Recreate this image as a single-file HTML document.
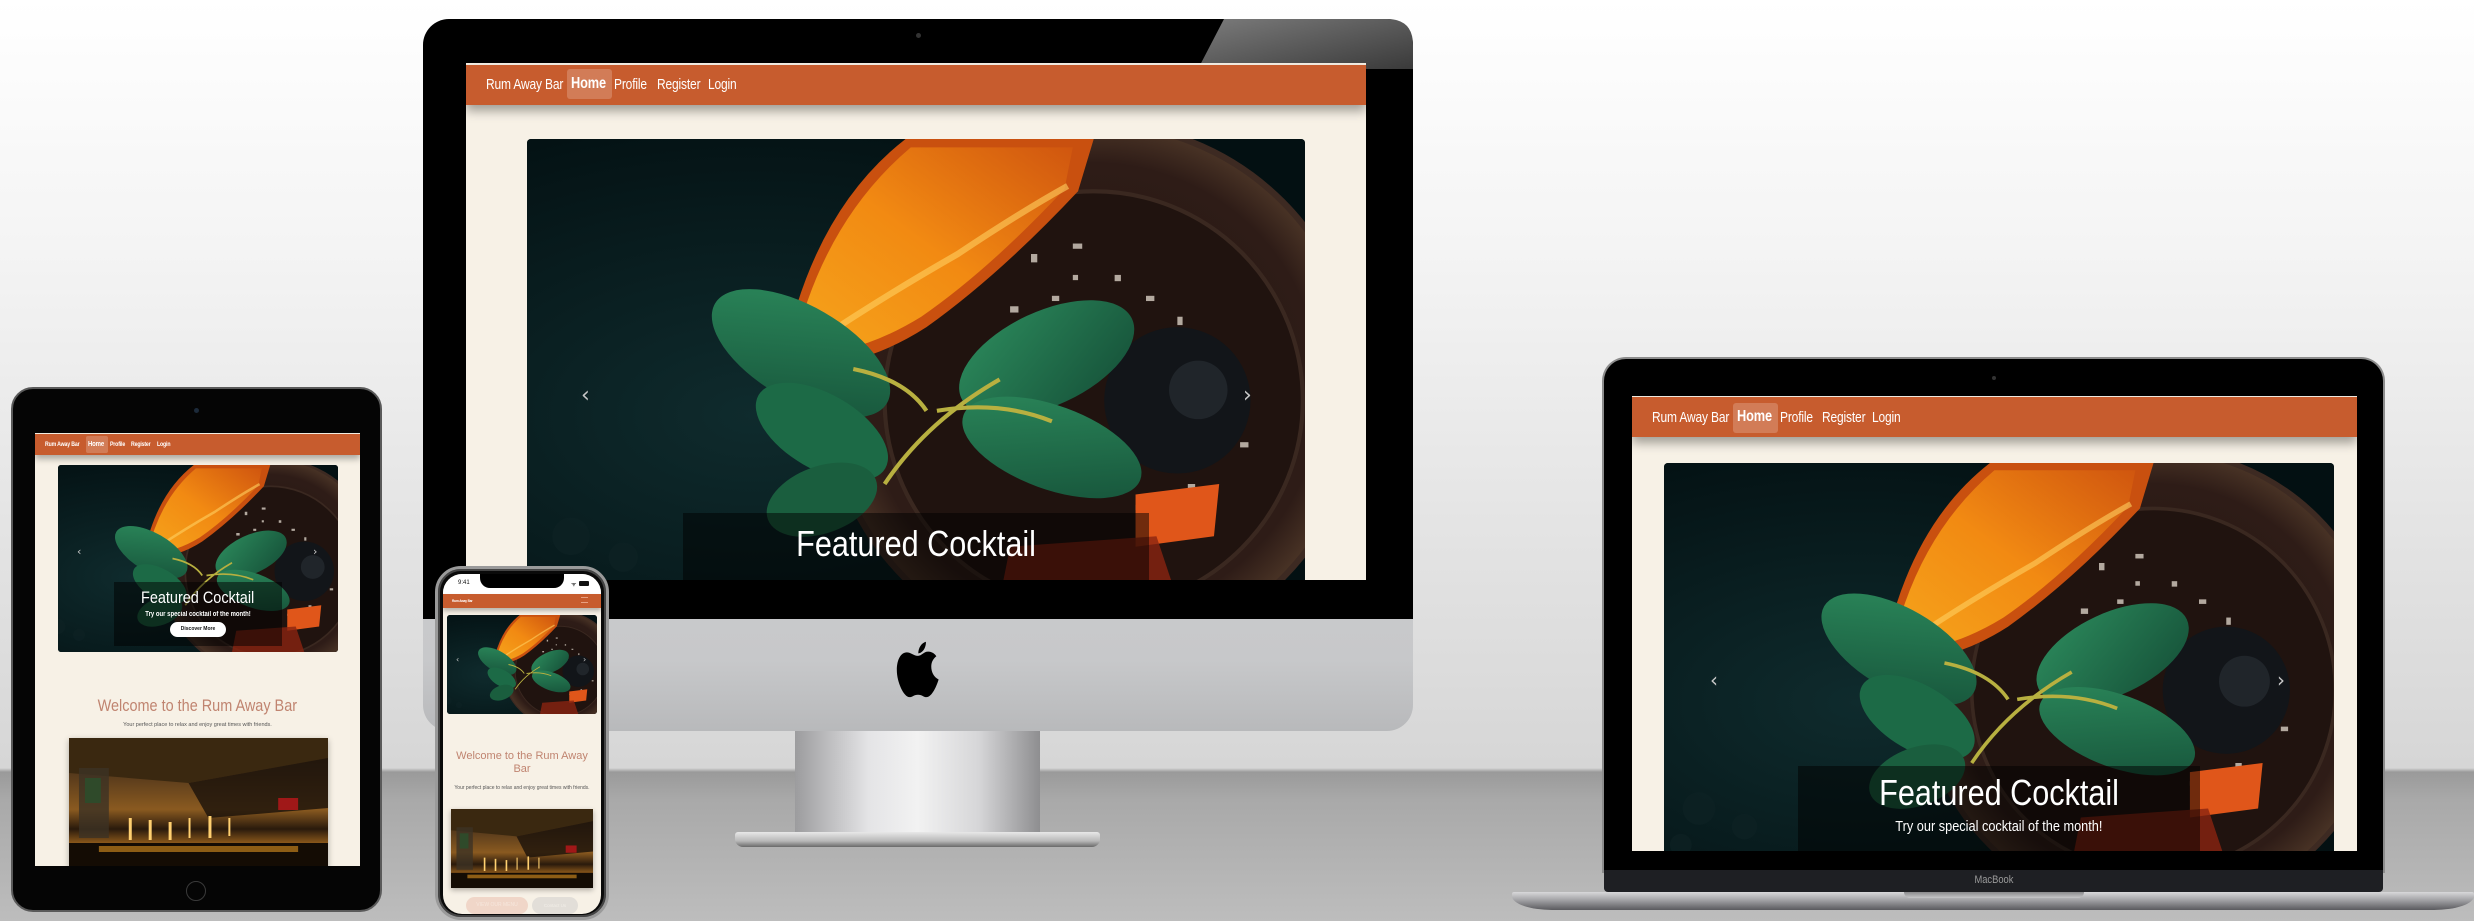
<!DOCTYPE html>
<html><head><meta charset="utf-8">
<style>
*{margin:0;padding:0;box-sizing:border-box}
body{width:2474px;height:921px;overflow:hidden;position:relative;font-family:"Liberation Sans",sans-serif;
background:linear-gradient(180deg,#ffffff 0px,#f4f4f4 250px,#e2e2e2 560px,#d6d6d6 768px,#9a9a9a 772px,#a9a9a9 800px,#bdbdbd 921px);}
.a{position:absolute}
.cream{background:#f7f1e6}
.nav{background:#c75c2e;box-shadow:0 6px 10px rgba(0,0,0,.35);color:#fff}
.nav span{position:absolute;white-space:nowrap}
.nav .n{transform:scaleX(.8);transform-origin:0 0;letter-spacing:-0.2px}
.car{overflow:hidden;border-radius:4px;background:#071619}
.car svg{position:absolute;left:0;top:0;width:100%;height:100%}
.cap{background:rgba(0,0,0,.5);color:#fff;text-align:center;white-space:nowrap}
.sx{display:inline-block;transform:scaleX(.85)}
.chev{color:#c8c8c8;font-family:"DejaVu Sans",sans-serif}
</style></head><body>

<svg width="0" height="0" style="position:absolute">
<defs>
<radialGradient id="bgg" cx="0.3" cy="0.6" r="0.7"><stop offset="0" stop-color="#0f2b2d"/><stop offset="1" stop-color="#031012"/></radialGradient>
<radialGradient id="gl" cx="0.5" cy="0.5" r="0.5"><stop offset="0" stop-color="#231512"/><stop offset="0.85" stop-color="#2e1c17"/><stop offset="1" stop-color="#4a3426"/></radialGradient>
<linearGradient id="org" x1="0" y1="1" x2="1" y2="0"><stop offset="0" stop-color="#f5a51c"/><stop offset="0.5" stop-color="#f28a12"/><stop offset="1" stop-color="#d0560f"/></linearGradient>
<linearGradient id="lf" x1="0" y1="0" x2="1" y2="1"><stop offset="0" stop-color="#2c8a5c"/><stop offset="1" stop-color="#155038"/></linearGradient>
<linearGradient id="barg" x1="0" y1="0" x2="0" y2="1"><stop offset="0" stop-color="#2a1d12"/><stop offset="0.3" stop-color="#5a3c1c"/><stop offset="0.55" stop-color="#8a5a20"/><stop offset="0.7" stop-color="#2a1a0c"/><stop offset="0.85" stop-color="#b07020"/><stop offset="1" stop-color="#1a1006"/></linearGradient>
<g id="ck">
<rect width="780" height="440" fill="url(#bgg)"/>
<circle cx="590" cy="40" r="30" fill="#3a0e12" opacity=".5"/>
<circle cx="560" cy="240" r="255" fill="url(#gl)" stroke="#3d2a22" stroke-width="6"/>
<circle cx="560" cy="250" r="200" fill="#20130f" stroke="#3a2820" stroke-width="4"/>
<g fill="#d8cfc4" opacity=".8">
<rect x="470" y="90" width="8" height="5"/><rect x="500" y="110" width="6" height="8"/><rect x="540" y="100" width="9" height="5"/><rect x="580" y="130" width="6" height="6"/><rect x="610" y="150" width="8" height="5"/><rect x="640" y="170" width="5" height="8"/><rect x="520" y="150" width="7" height="5"/><rect x="560" y="170" width="6" height="6"/><rect x="480" y="160" width="8" height="6"/><rect x="660" y="210" width="7" height="5"/><rect x="690" y="250" width="5" height="8"/><rect x="700" y="290" width="8" height="5"/><rect x="650" y="330" width="7" height="6"/><rect x="620" y="300" width="6" height="6"/><rect x="600" y="350" width="8" height="5"/><rect x="540" y="130" width="5" height="5"/><rect x="590" y="190" width="6" height="5"/><rect x="670" y="280" width="6" height="6"/>
</g>
<circle cx="640" cy="250" r="70" fill="#121519"/>
<circle cx="660" cy="240" r="28" fill="#2a3036" opacity=".6"/>
<path d="M600 340 L680 330 L675 380 L600 390 Z" fill="#e0561a"/>
<path d="M480 390 L620 380 L640 440 L470 440 Z" fill="#8a2410" opacity=".8"/>
<path d="M262 215 Q290 70 380 0 L560 0 L545 50 Q470 130 400 180 Q330 225 262 215 Z" fill="#c9500f"/>
<path d="M272 205 Q300 80 385 8 L540 8 L532 48 Q460 125 395 170 Q330 210 272 205 Z" fill="url(#org)"/>
<path d="M300 190 Q360 150 430 110 Q490 70 535 45" stroke="#ffd060" stroke-width="6" fill="none" opacity=".6"/>
<ellipse cx="280" cy="205" rx="95" ry="45" transform="rotate(30 280 205)" fill="url(#lf)"/>
<ellipse cx="515" cy="210" rx="90" ry="45" transform="rotate(-25 515 210)" fill="url(#lf)"/>
<ellipse cx="300" cy="280" rx="70" ry="36" transform="rotate(30 300 280)" fill="#1c6a46"/>
<ellipse cx="520" cy="295" rx="90" ry="40" transform="rotate(20 520 295)" fill="url(#lf)"/>
<ellipse cx="300" cy="345" rx="55" ry="32" transform="rotate(-20 300 345)" fill="#1a5e3e"/>
<path d="M360 330 Q400 270 470 230 M400 260 Q380 230 330 220 M410 260 Q470 250 520 270" stroke="#b8b040" stroke-width="4" fill="none"/>
<g fill="#0e2224" opacity=".7"><circle cx="60" cy="380" r="18"/><circle cx="110" cy="400" r="14"/><circle cx="40" cy="420" r="12"/></g>
</g>
<g id="bar">
<rect width="260" height="130" fill="url(#barg)"/>
<path d="M0 0 L260 0 L260 20 L120 45 L0 35 Z" fill="#3a2810"/>
<path d="M120 45 L260 20 L260 70 L140 80 Z" fill="#1a120a" opacity=".8"/>
<rect x="10" y="30" width="30" height="70" fill="#3c3224" opacity=".8"/>
<rect x="16" y="40" width="16" height="25" fill="#2f4a2a"/>
<g fill="#ffd070"><rect x="60" y="80" width="3" height="22"/><rect x="80" y="82" width="3" height="20"/><rect x="100" y="84" width="3" height="18"/><rect x="120" y="80" width="2" height="20"/><rect x="140" y="78" width="3" height="22"/><rect x="160" y="80" width="2" height="18"/></g>
<rect x="210" y="60" width="20" height="12" fill="#a01818"/>
<rect x="0" y="105" width="260" height="25" fill="#140c04"/>
<rect x="30" y="108" width="200" height="6" fill="#c0801c" opacity=".7"/>
</g>
</defs>
</svg>

<!-- ========== iMac ========== -->
<div class="a" style="left:423px;top:19px;width:990px;height:712px;border-radius:26px;background:linear-gradient(180deg,#d9dadc,#c7c8ca 90%,#b8b9bb);"></div>
<div class="a" style="left:423px;top:19px;width:990px;height:600px;border-radius:26px 26px 0 0;background:#000;"></div>
<svg class="a" style="left:1190px;top:19px" width="223" height="50"><defs><linearGradient id="gs" x1="0" y1="0" x2="1" y2="1"><stop offset="0" stop-color="#7b7b7b"/><stop offset="1" stop-color="#3a3a3a"/></linearGradient></defs><path d="M34 0 L197 0 Q223 0 223 26 L223 50 L8 50 Z" fill="url(#gs)"/></svg>
<div class="a" style="left:916px;top:33px;width:5px;height:5px;border-radius:50%;background:#333"></div>
<div class="a cream" style="left:466px;top:63px;width:900px;height:517px;overflow:hidden">
  <div class="a nav" style="left:0;top:2px;width:900px;height:40px;">
    <span class="n" style="left:20px;top:11px;font-size:15px">Rum Away Bar</span>
    <span style="left:101px;top:4px;width:45px;height:30px;background:rgba(255,255,255,.2);border-radius:3px"></span>
    <span class="n" style="left:105px;top:10px;font-size:16px;font-weight:bold">Home</span>
    <span class="n" style="left:148px;top:11px;font-size:15px">Profile</span>
    <span class="n" style="left:191px;top:11px;font-size:15px">Register</span>
    <span class="n" style="left:242px;top:11px;font-size:15px">Login</span>
  </div>
  <div class="a car" style="left:61px;top:76px;width:778px;height:460px">
    <svg viewBox="0 0 780 440" preserveAspectRatio="xMidYMid slice"><use href="#ck"/></svg>
    <div class="a chev" style="left:54px;top:244px;font-size:22px">‹</div>
    <div class="a chev" style="left:716px;top:244px;font-size:22px">›</div>
    <div class="a cap" style="left:156px;top:374px;width:466px;height:90px;font-size:36px;padding-top:10px"><span class="sx">Featured Cocktail</span></div>
  </div>
</div>
<svg class="a" style="left:894px;top:640px" width="48" height="60" viewBox="0 0 170 170" preserveAspectRatio="none"><path d="M85 45 C70 45 60 35 45 35 C25 35 10 55 10 85 C10 120 35 162 55 162 C65 162 70 155 85 155 C100 155 105 162 115 162 C135 162 152 128 158 112 C140 104 132 90 132 75 C132 62 140 52 150 46 C141 35 128 33 120 33 C106 33 97 45 85 45 Z M86 38 C86 22 98 8 113 5 C114 22 101 37 86 38 Z" fill="#000"/></svg>
<div class="a" style="left:795px;top:731px;width:245px;height:104px;background:linear-gradient(90deg,#9c9c9e,#e4e4e6 30%,#f2f2f2 50%,#d6d6d8 75%,#8e8e90);clip-path:polygon(0 0,100% 0,104% 100%,-4% 100%)"></div>
<div class="a" style="left:735px;top:832px;width:365px;height:15px;border-radius:3px 3px 8px 8px;background:linear-gradient(180deg,#e8e8e8,#b8b8b8 60%,#6a6a6a)"></div>

<!-- ========== Tablet ========== -->
<div class="a" style="left:11px;top:387px;width:371px;height:525px;border-radius:22px;background:#050505;border:2px solid #5a5a5a"></div>
<div class="a" style="left:194px;top:408px;width:5px;height:5px;border-radius:50%;background:#1c2a3a"></div>
<div class="a" style="left:186px;top:881px;width:20px;height:20px;border-radius:50%;border:1.5px solid #3a3a3a"></div>
<div class="a cream" style="left:35px;top:433px;width:325px;height:433px;overflow:hidden">
  <div class="a nav" style="left:0;top:1px;width:325px;height:21px;box-shadow:0 4px 6px rgba(0,0,0,.3)">
    <span class="n" style="left:10px;top:7px;font-size:6.5px;font-weight:bold">Rum Away Bar</span>
    <span style="left:51px;top:2px;width:22px;height:17px;background:rgba(255,255,255,.2);border-radius:2px"></span>
    <span class="n" style="left:53px;top:5px;font-size:7.5px;font-weight:bold">Home</span>
    <span class="n" style="left:75px;top:7px;font-size:6.5px;font-weight:bold">Profile</span>
    <span class="n" style="left:96px;top:7px;font-size:6.5px;font-weight:bold">Register</span>
    <span class="n" style="left:122px;top:7px;font-size:6.5px;font-weight:bold">Login</span>
  </div>
  <div class="a car" style="left:23px;top:32px;width:280px;height:187px;border-radius:3px">
    <svg viewBox="0 0 780 440" preserveAspectRatio="xMidYMid slice"><use href="#ck"/></svg>
    <div class="a chev" style="left:19px;top:80px;font-size:11px">‹</div>
    <div class="a chev" style="left:255px;top:80px;font-size:11px">›</div>
    <div class="a cap" style="left:56px;top:117px;width:168px;height:64px">
      <div style="font-size:17px;margin-top:6px"><span class="sx">Featured Cocktail</span></div>
      <div style="font-size:7px;font-weight:bold;margin-top:3px"><span class="sx">Try our special cocktail of the month!</span></div>
      <div style="margin:4px auto 0;width:56px;height:15px;border-radius:8px;background:#fff;color:#111;font-size:5px;font-weight:bold;line-height:15px">Discover More</div>
    </div>
  </div>
  <div class="a" style="left:0;top:263px;width:325px;text-align:center;color:#c08470;font-size:17px"><span class="sx">Welcome to the Rum Away Bar</span></div>
  <div class="a" style="left:0;top:289px;width:325px;text-align:center;color:#555;font-size:5.5px">Your perfect place to relax and enjoy great times with friends.</div>
  <div class="a" style="left:34px;top:305px;width:259px;height:130px;overflow:hidden;box-shadow:0 2px 6px rgba(0,0,0,.3)"><svg width="259" height="130" viewBox="0 0 260 130" preserveAspectRatio="none"><use href="#bar"/></svg></div>
</div>

<!-- ========== Phone ========== -->
<div class="a" style="left:435px;top:566px;width:174px;height:354px;border-radius:26px;background:#0a0a0a;border:3px solid #9a9a9a;box-shadow:inset 0 0 0 2px #444"></div>
<div class="a cream" style="left:443px;top:574px;width:158px;height:340px;border-radius:19px;overflow:hidden">
  <div class="a" style="left:0;top:0;width:158px;height:20px;background:#fff"></div>
  <div class="a" style="left:15px;top:6px;font-size:6px;color:#111">9:41</div>
  <div class="a" style="left:37px;top:0;width:84px;height:14px;background:#000;border-radius:0 0 10px 10px"></div>
  <div class="a" style="left:136px;top:7px;width:10px;height:5px;background:#111;border-radius:1px"></div>
  <div class="a" style="left:128px;top:6px;font-size:6px;color:#111">ᯤ</div>
  <div class="a nav" style="left:0;top:20px;width:158px;height:14px;box-shadow:0 3px 4px rgba(0,0,0,.25)">
    <span class="n" style="left:9px;top:4px;font-size:4px;font-weight:bold">Rum Away Bar</span>
    <span style="left:138px;top:3px;width:7px;height:6px;border-top:1px solid #e9a080;border-bottom:1px solid #e9a080"></span>
  </div>
  <div class="a car" style="left:4px;top:41px;width:150px;height:99px;border-radius:3px">
    <svg viewBox="0 0 780 440" preserveAspectRatio="xMidYMid slice"><use href="#ck"/></svg>
    <div class="a chev" style="left:9px;top:40px;font-size:8px">‹</div>
    <div class="a chev" style="left:136px;top:40px;font-size:8px">›</div>
  </div>
  <div class="a" style="left:0;top:176px;width:158px;text-align:center;color:#c08470;font-size:11px;line-height:13px">Welcome to the Rum Away<br>Bar</div>
  <div class="a" style="left:6px;top:210px;width:146px;text-align:center;color:#555;font-size:5px;line-height:8px">Your perfect place to relax and enjoy great times with friends.</div>
  <div class="a" style="left:8px;top:235px;width:142px;height:79px;overflow:hidden;box-shadow:0 2px 5px rgba(0,0,0,.3)"><svg width="142" height="79" viewBox="0 0 260 130" preserveAspectRatio="none"><use href="#bar"/></svg></div>
  <div class="a" style="left:23px;top:323px;width:62px;height:17px;border-radius:9px;background:#f0d6c8;color:#f6e6dc;font-size:5px;text-align:center;line-height:17px">VIEW OUR MENU</div>
  <div class="a" style="left:89px;top:323px;width:46px;height:17px;border-radius:9px;background:#e2ded8;color:#f2eee8;font-size:4.5px;text-align:center;line-height:17px">Contact Us</div>
</div>

<!-- ========== Laptop ========== -->
<div class="a" style="left:1602px;top:357px;width:783px;height:516px;border-radius:24px 24px 0 0;background:#000;border:2px solid #8c8c8c;border-bottom:none"></div>
<div class="a" style="left:1992px;top:376px;width:4px;height:4px;border-radius:50%;background:#333"></div>
<div class="a cream" style="left:1632px;top:396px;width:725px;height:455px;overflow:hidden">
  <div class="a nav" style="left:0;top:1px;width:725px;height:40px;">
    <span class="n" style="left:20px;top:12px;font-size:15px">Rum Away Bar</span>
    <span style="left:101px;top:6px;width:45px;height:30px;background:rgba(255,255,255,.2);border-radius:3px"></span>
    <span class="n" style="left:105px;top:11px;font-size:16px;font-weight:bold">Home</span>
    <span class="n" style="left:148px;top:12px;font-size:15px">Profile</span>
    <span class="n" style="left:190px;top:12px;font-size:15px">Register</span>
    <span class="n" style="left:240px;top:12px;font-size:15px">Login</span>
  </div>
  <div class="a car" style="left:32px;top:67px;width:670px;height:400px">
    <svg viewBox="0 0 780 440" preserveAspectRatio="xMidYMid slice"><use href="#ck"/></svg>
    <div class="a chev" style="left:46px;top:205px;font-size:20px">‹</div>
    <div class="a chev" style="left:613px;top:205px;font-size:20px">›</div>
    <div class="a cap" style="left:134px;top:303px;width:402px;height:100px">
      <div style="font-size:36px;margin-top:6px"><span class="sx">Featured Cocktail</span></div>
      <div style="font-size:15px;margin-top:4px"><span class="sx">Try our special cocktail of the month!</span></div>
    </div>
  </div>
</div>
<div class="a" style="left:1604px;top:870px;width:779px;height:22px;background:#1e1f23;border-radius:0 0 4px 4px"></div>
<div class="a" style="left:1604px;top:874px;width:779px;text-align:center;color:#9a9a9a;font-size:11px"><span class="sx">MacBook</span></div>
<div class="a" style="left:1512px;top:892px;width:962px;height:18px;border-radius:2px 2px 40px 40px/2px 2px 14px 14px;background:linear-gradient(180deg,#d8d8da,#a8a8ab 40%,#5a5a5e 100%)"></div>
<div class="a" style="left:1904px;top:892px;width:180px;height:6px;border-radius:0 0 6px 6px;background:linear-gradient(180deg,#8a8a8c,#c6c6c8)"></div>
</body></html>
